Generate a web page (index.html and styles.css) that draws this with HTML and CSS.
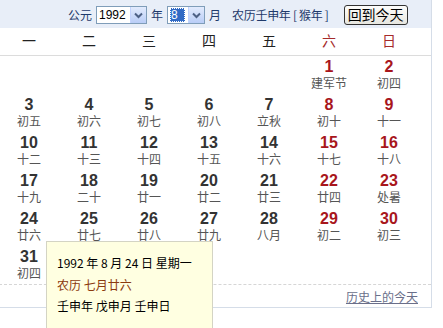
FILE: index.html
```html
<!DOCTYPE html>
<html lang="zh-CN">
<head>
    <meta charset="UTF-8">
    <title>万年历</title>
    <link rel="stylesheet" href="styles.css">
</head>
<body>

<div class="calendar">
    <div class="toolbar">
        <span class="label">公元</span>
        <span class="combo year"><span class="combo-value">1992</span><span class="combo-btn"><svg width="9" height="7" viewBox="0 0 9 7"><path d="M1 1.5 L4.5 5 L8 1.5" fill="none" stroke="#4d6185" stroke-width="2"/></svg></span></span>
        <span class="label">年</span>
        <span class="combo month"><span class="combo-value"><span class="picked">8</span></span><span class="combo-btn"><svg width="9" height="7" viewBox="0 0 9 7"><path d="M1 1.5 L4.5 5 L8 1.5" fill="none" stroke="#4d6185" stroke-width="2"/></svg></span></span>
        <span class="label">月</span>
        <span class="label lunar-year">农历壬申年 [ 猴年 ]</span>
        <button class="today-btn">回到今天</button>
    </div>

    <div class="weekdays">
        <span>一</span><span>二</span><span>三</span><span>四</span><span>五</span>
        <span class="weekend">六</span><span class="weekend">日</span>
    </div>

    <div class="days" id="days"></div>

    <div class="footer">
        <a href="#" class="history-link">历史上的今天</a>
    </div>

    <div class="tip">
        <p>1992 年 8 月 24 日 星期一</p>
        <p class="tip-lunar">农历 七月廿六</p>
        <p>壬申年 戊申月 壬申日</p>
    </div>
</div>

<script>
    const lunar = ['建军节', '初四', '初五', '初六', '初七', '初八', '立秋', '初十', '十一',
        '十二', '十三', '十四', '十五', '十六', '十七', '十八', '十九', '二十', '廿一', '廿二',
        '廿三', '廿四', '处暑', '廿六', '廿七', '廿八', '廿九', '八月', '初二', '初三', '初四'];
    const daysBox = document.getElementById('days');
    const offset = 5; // 1992-08-01 is a Saturday

    for (let i = 0; i < offset; i++) {
        daysBox.appendChild(document.createElement('div'));
    }

    for (let d = 1; d <= 31; d++) {
        const cell = document.createElement('div');
        cell.className = 'day';
        const col = (offset + d - 1) % 7;
        if (col >= 5) {
            cell.classList.add('weekend');
        }
        const num = document.createElement('span');
        num.className = 'num';
        num.textContent = d;
        const sub = document.createElement('span');
        sub.className = 'sub';
        sub.textContent = lunar[d - 1];
        cell.appendChild(num);
        cell.appendChild(sub);
        daysBox.appendChild(cell);
    }
</script>

</body>
</html>
```

FILE: styles.css
```css
html, body {
    min-height: 328px;
}
body {
    margin: 0;
    background: #fff;
    font-family: "Noto Sans CJK SC", "Liberation Sans", sans-serif;
}
.calendar {
    position: relative;
    width: 431px;
    height: 307px;
    border-right: 1px solid #d5dde8;
    border-bottom: 1px solid #d5dde8;
}
.toolbar {
    height: 28px;
    background: #e8eef8;
    display: flex;
    align-items: center;
    padding-left: 68px;
    font-size: 12px;
    color: #1f3a6b;
}
.label {
    margin-right: 4px;
}
.lunar-year {
    margin-left: 7px;
    margin-right: 0;
    letter-spacing: -0.3px;
}
.combo {
    display: flex;
    align-items: center;
    height: 16px;
    border: 1px solid #7f9db9;
    background: #fff;
    margin-right: 4px;
    margin-top: 2px;
}
.combo.year {
    width: 49px;
}
.combo.month {
    width: 36px;
}
.combo-value {
    flex: 1;
    font-family: "Liberation Sans", sans-serif;
    font-size: 12px;
    color: #000;
    padding-left: 2px;
    line-height: 16px;
}
.picked {
    display: inline-block;
    background: #316ac5;
    color: #fff;
    width: 14px;
    outline: 1px dotted #fff;
    outline-offset: -1px;
    line-height: 14px;
    text-align: left;
    padding-left: 1px;
    margin-top: 1px;
}
.combo-btn {
    width: 15px;
    height: 16px;
    background: linear-gradient(#e2ebfd, #b9cdf7);
    border-left: 1px solid #c3d3fd;
    display: flex;
    align-items: center;
    justify-content: center;
}
.today-btn {
    margin-left: 15px;
    margin-top: 1px;
    width: 64px;
    height: 20px;
    padding: 0;
    border: 1px solid #333;
    border-radius: 3px;
    background: linear-gradient(#fdfdfb, #e7e6df);
    font-family: "Noto Sans CJK SC", sans-serif;
    font-size: 14px;
    line-height: 17px;
    color: #000;
}
.weekdays {
    height: 24px;
    padding-bottom: 3px;
    border-bottom: 1px solid #dcdcdc;
    display: grid;
    grid-template-columns: repeat(7, 60px);
    align-items: center;
    margin-left: -1px;
    font-size: 14px;
    color: #222;
    text-align: center;
}
.weekdays .weekend {
    color: #a52a2a;
}
.days {
    display: grid;
    grid-template-columns: repeat(7, 60px);
    grid-auto-rows: 38px;
    margin-left: -1px;
    border-bottom: 1px dashed #d6d6d6;
}
.day {
    display: flex;
    flex-direction: column;
    align-items: center;
    padding-top: 2px;
}
.num {
    font-family: "Liberation Sans", sans-serif;
    font-weight: bold;
    font-size: 16px;
    line-height: 18px;
    color: #333;
}
.sub {
    font-size: 12px;
    line-height: 14px;
    color: #555;
}
.day.weekend .num {
    color: #a8161c;
}
.footer {
    height: 22px;
    display: flex;
    align-items: center;
    justify-content: flex-end;
    padding-right: 13px;
}
.history-link {
    font-size: 12px;
    color: #6a6f8a;
    text-decoration: underline;
}
.tip {
    position: absolute;
    left: 46px;
    top: 241px;
    width: 155px;
    height: 90px;
    padding: 10px 0 0 10px;
    background: #ffffe1;
    border: 1px solid #d4d4c4;
    font-size: 12px;
    color: #000;
}
.tip p {
    margin: 0;
    line-height: 21.5px;
}
.tip-lunar {
    color: #8b3a0e;
}
```
